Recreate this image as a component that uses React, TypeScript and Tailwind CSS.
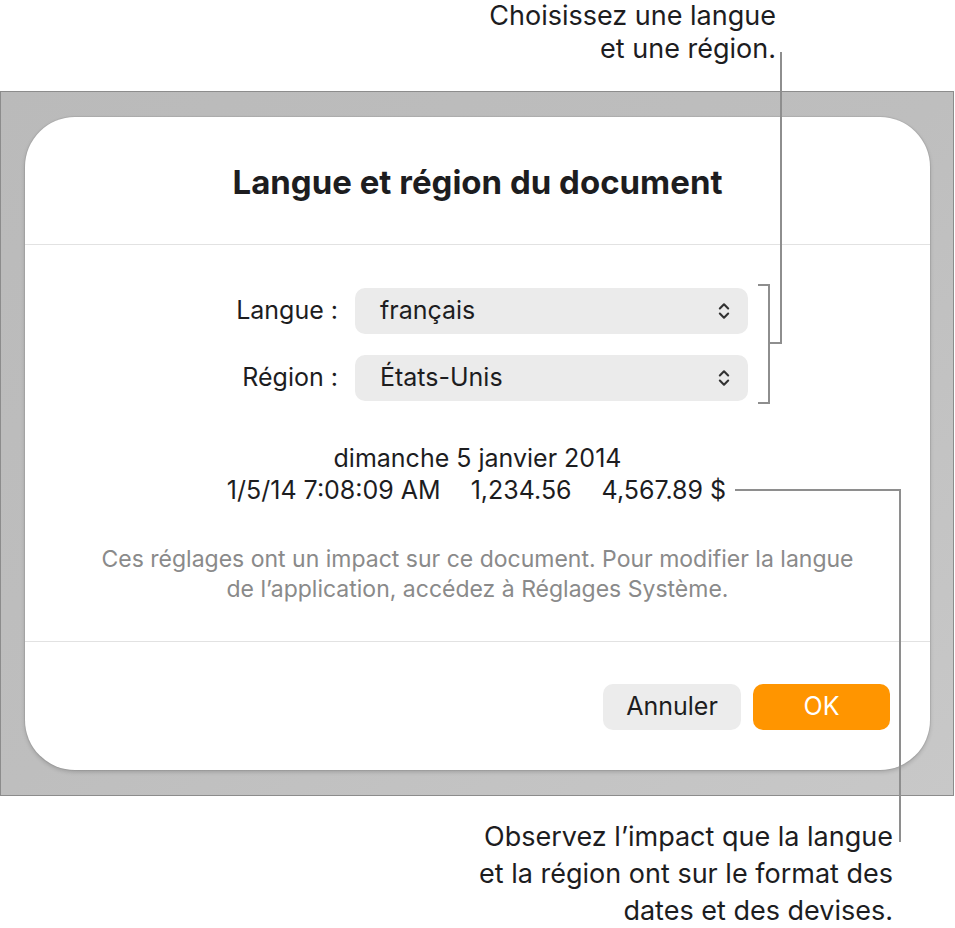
import React from 'react';
import { ChevronsUpDown } from 'lucide-react';

const font = { fontFamily: 'Inter, "Noto Sans", sans-serif' };

const PopupRow: React.FC<{ label: string; value: string }> = ({ label, value }) => (
  <div className="flex items-center">
    <div className="w-[120px] text-right text-[25px] text-[#1d1d1f] whitespace-nowrap">{label}</div>
    <div className="ml-[17px] w-[393px] h-[46px] rounded-[10px] bg-[#ebebeb] flex items-center justify-between pl-[25px] pr-[14px]">
      <span className="text-[25px] text-[#1d1d1f]">{value}</span>
      <ChevronsUpDown size={20} strokeWidth={2.5} className="text-[#333333]" />
    </div>
  </div>
);

const App: React.FC = () => {
  return (
    <div className="relative w-[955px] h-[928px] bg-white overflow-hidden" style={font}>
      {/* top callout */}
      <div className="h-[91px] pt-[2px] pr-[179px] text-right text-[27px] text-[#1d1d1f]">
        <div className="leading-[27px]">Choisissez une langue</div>
        <div className="leading-[40px]">et une région.</div>
      </div>

      {/* gray frame */}
      <div className="w-[954px] h-[705px] border border-[#8c8c8c] bg-gradient-to-br from-[#bababa] via-[#bebebe] to-[#c8c8c8] pt-[25px] pl-[24px] pr-[22px]">
        <div className="w-[905px] h-[653px] rounded-[50px] bg-white shadow-[0_0_0_1px_rgba(0,0,0,0.06),0_2px_4px_rgba(0,0,0,0.18)] flex flex-col">
          <div className="h-[128px] pt-[4px] flex items-center justify-center border-b border-[#e2e2e2]">
            <h1 className="text-[33px] font-bold text-[#1d1d1f]">Langue et région du document</h1>
          </div>

          <div className="pt-[43px] pl-[193px] flex flex-col gap-[21px]">
            <PopupRow label="Langue :" value="français" />
            <PopupRow label="Région :" value="États-Unis" />
          </div>

          <div className="mt-[41px] text-center text-[25px] leading-[32px] text-[#1d1d1f]">
            <div>dimanche 5 janvier 2014</div>
            <div className="flex justify-center gap-[30px] pr-[2px]">
              <span>1/5/14 7:08:09 AM</span>
              <span>1,234.56</span>
              <span>4,567.89 $</span>
            </div>
          </div>

          <div className="mt-[38px] text-center text-[23px] leading-[30px] text-[#8a8a8a]">
            <div>Ces réglages ont un impact sur ce document. Pour modifier la langue</div>
            <div>de l’application, accédez à Réglages Système.</div>
          </div>

          <div className="mt-[37px] border-b border-[#e2e2e2]" />

          <div className="flex justify-end gap-[12px] pt-[42px] pr-[40px]">
            <button className="w-[138px] h-[46px] rounded-[10px] bg-[#ececec] text-[25px] text-[#1d1d1f]">Annuler</button>
            <button className="w-[137px] h-[46px] rounded-[10px] bg-[#ff9500] text-[25px] text-white">OK</button>
          </div>
        </div>
      </div>

      {/* bottom callout */}
      <div className="pt-[22px] pr-[62px] text-right text-[27px] leading-[37px] text-[#1d1d1f]">
        <div>Observez l’impact que la langue</div>
        <div>et la région ont sur le format des</div>
        <div>dates et des devises.</div>
      </div>

      {/* leader lines */}
      <svg className="absolute inset-0 pointer-events-none" width="955" height="928" fill="none" stroke="#8e8e8e" strokeWidth="2">
        <path d="M781 52 V343 H769" />
        <path d="M758 285 H769 V403 H758" />
        <path d="M735 490 H900 V842" />
      </svg>
    </div>
  );
};

export default App;
